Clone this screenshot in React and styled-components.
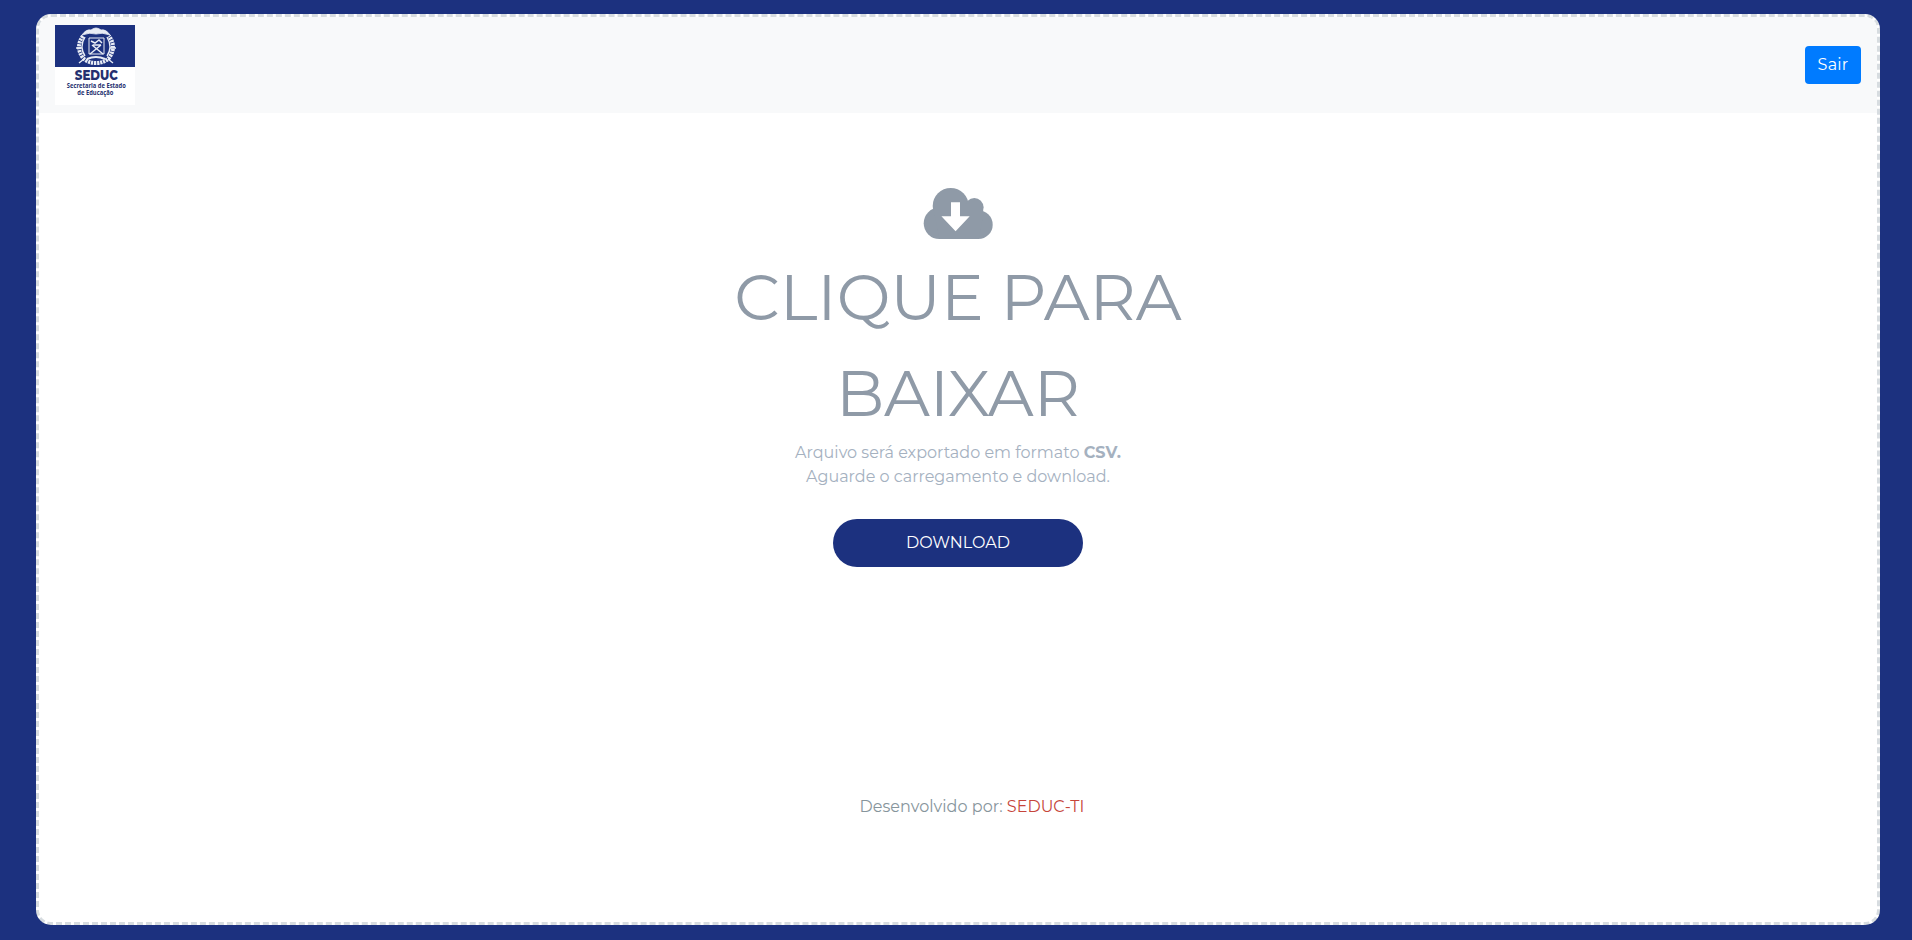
import React from "react";
import styled, { createGlobalStyle } from "styled-components";

const GlobalStyle = createGlobalStyle`
  *, *::before, *::after { box-sizing: border-box; }
  html, body { height: 100%; }
  body {
    margin: 0;
    overflow: hidden;
    background: #1c317f;
    font-family: Montserrat, Inter, "Liberation Sans", sans-serif;
    font-size: 16px;
    line-height: 24px;
  }
`;

const Card = styled.div`
  height: 911px;
  margin: 14px 32px 15px 36px;
  display: flex;
  flex-direction: column;
  background: #fff;
  border: 3px dashed #d7dce0;
  border-radius: 15px;
`;

const Navbar = styled.nav`
  height: 96px;
  flex: none;
  display: flex;
  align-items: center;
  justify-content: space-between;
  padding: 8px 16px;
  background: #f8f9fa;
  border-radius: 12px 12px 0 0;
`;

const LogoSvg = styled.svg`
  display: block;
  width: 80px;
  height: 80px;
`;

const ExitButton = styled.button`
  width: 56px;
  height: 38px;
  padding: 0;
  border: 0;
  border-radius: 4px;
  background: #007bff;
  color: #fff;
  font: inherit;
  letter-spacing: 0.2px;
`;

const Main = styled.main`
  display: flex;
  flex-direction: column;
  align-items: center;
  padding-top: 75px;
  text-align: center;
`;

const CloudSvg = styled.svg`
  display: block;
  width: 70px;
  height: 51px;
`;

const Title = styled.h1`
  margin: 10px 0 0;
  color: #8f9aa7;
  font-size: 64px;
  font-weight: 400;
  line-height: 96px;
`;

const Note = styled.p`
  margin: 0;
  color: #a5b1bf;
  strong { font-weight: 700; }
`;

const DownloadButton = styled.button`
  width: 250px;
  height: 48px;
  margin-top: 30px;
  padding: 0;
  border: 0;
  border-radius: 24px;
  background: #1c317f;
  color: #fff;
  font: inherit;
`;

const Footer = styled.footer`
  margin-top: 228px;
  padding-left: 28px;
  color: #87959c;
  letter-spacing: 0.03px;
`;

const Team = styled.span`
  color: #c6453a;
`;

function Logo() {
  return (
    <LogoSvg viewBox="0 0 80 80" role="img" aria-label="SEDUC">
      <rect width="80" height="80" fill="#fff" />
      <rect width="80" height="42" fill="#1c317f" />
      <g fill="none" stroke="#e8ecf5">
        <path d="M27 10Q31 4 36 5Q41 1 46 5Q51 4 55 10Q47 7 41 9Q35 7 27 10Z" fill="#e8ecf5" strokeWidth=".8" />
        <path d="M28 11Q20 22 28 33Q33 38 41 38Q49 38 54 33Q62 22 54 11" strokeWidth="4" strokeDasharray="2.2 .8" />
        <path d="M30 12Q24 22 30 31M52 12Q58 22 52 31M21 23H27M55 23H61M29 34L24 38M53 34L58 38" strokeWidth="1.4" />
        <path d="M34 13H49V29H34Z" strokeWidth="1" />
        <path d="M35 29L46 20M48 29L37 20M36 16L40 18L44 15L47 18M38 20H46" strokeWidth="1.5" />
        <path d="M32 34Q41 30 50 34" strokeWidth="2" />
      </g>
      <g fill="#25306f" textAnchor="middle">
        <text x="41.3" y="54.6" fontFamily="Montserrat, sans-serif" fontSize="13.8" fontWeight="800" textLength="43" lengthAdjust="spacingAndGlyphs">SEDUC</text>
        <text x="41.3" y="62.5" fontFamily="Open Sans, sans-serif" fontSize="6.6" fontWeight="700" textLength="59" lengthAdjust="spacingAndGlyphs">Secretaria de Estado</text>
        <text x="40.3" y="70.3" fontFamily="Open Sans, sans-serif" fontSize="6.6" fontWeight="700" textLength="36" lengthAdjust="spacingAndGlyphs">de Educação</text>
      </g>
    </LogoSvg>
  );
}

function CloudDownload() {
  return (
    <CloudSvg viewBox="-0.7 0 70 51" aria-hidden="true">
      <g fill="#8f9aa7">
        <circle cx="27" cy="18" r="18" />
        <circle cx="50.6" cy="19.3" r="9.2" />
        <circle cx="15.7" cy="35.3" r="15.7" />
        <circle cx="54.7" cy="36.7" r="14.3" />
        <path d="M9.300 18H59.500V27L55 51H15.700Z" />
      </g>
      <path d="M27.300 14.300H36.300V28.300H46L31.900 43.300L17.700 28.300H27.300Z" fill="#fff" />
    </CloudSvg>
  );
}

export default function App() {
  return (
    <>
      <GlobalStyle />
      <Card>
        <Navbar>
          <Logo />
          <ExitButton>Sair</ExitButton>
        </Navbar>
        <Main>
          <CloudDownload />
          <Title>
            CLIQUE PARA
            <br />
            BAIXAR
          </Title>
          <Note>
            Arquivo será exportado em formato <strong>CSV.</strong>
            <br />
            Aguarde o carregamento e download.
          </Note>
          <DownloadButton>DOWNLOAD</DownloadButton>
          <Footer>Desenvolvido por: <Team>SEDUC-TI</Team></Footer>
        </Main>
      </Card>
    </>
  );
}
